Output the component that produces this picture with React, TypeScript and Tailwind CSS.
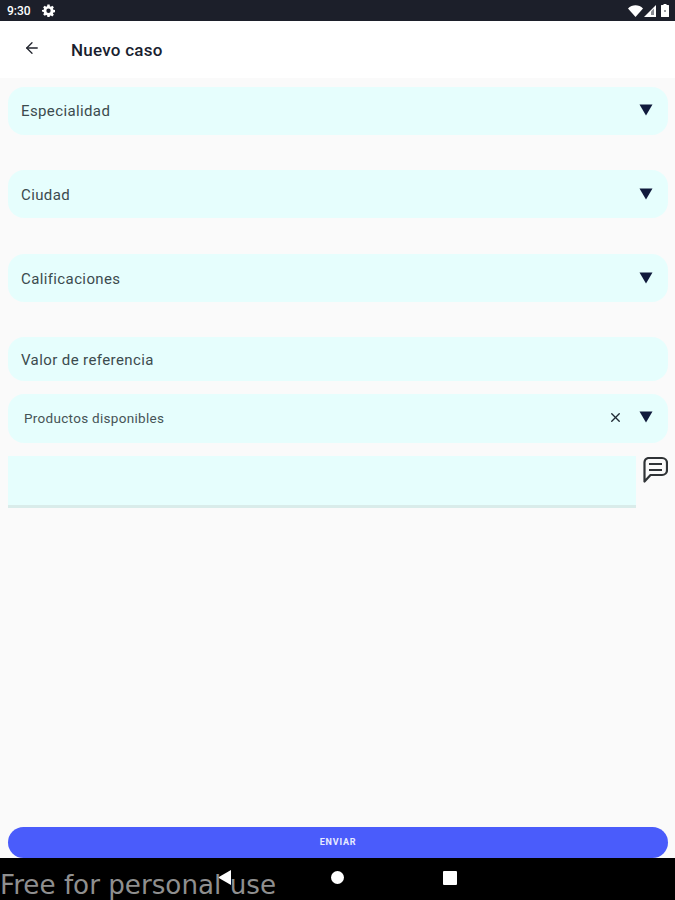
import React from 'react';
import { ArrowLeft, X } from 'lucide-react';

const font = { fontFamily: 'Roboto, sans-serif' };

function Caret() {
  return (
    <svg width="14" height="12" viewBox="0 0 14 12" className="mb-[3px] shrink-0">
      <path d="M0.5 0.5H13.5L7 11.5Z" fill="#101a3c" />
    </svg>
  );
}

function SelectField({ label, className }: { label: string; className: string }) {
  return (
    <div className={`flex h-12 items-center justify-between rounded-2xl bg-[#e6fefd] pl-[13px] pr-[15px] ${className}`}>
      <span className="text-[15px] tracking-[0.38px] text-[#3c4b4e]">{label}</span>
      <Caret />
    </div>
  );
}

export default function App() {
  return (
    <div className="relative flex h-[900px] w-[675px] flex-col overflow-hidden bg-[#fafafa]" style={font}>
      {/* barra de estado */}
      <div className="flex h-[21px] items-center justify-between bg-[#1c1f2a] pl-[7px] pr-[6px] text-white">
        <div className="flex items-center gap-[11px]">
          <span className="text-[12px] font-medium">9:30</span>
          <svg width="13" height="13" viewBox="0 0 24 24" fill="white">
            <path
              fillRule="evenodd"
              d="M10 1h4l.6 3.1 1.8.8L19 3.1 21.9 6l-1.8 2.6.8 1.8L24 11v4l-3.1.6-.8 1.8 1.8 2.6-2.9 2.9-2.6-1.8-1.8.8L14 24h-4l-.6-3.1-1.8-.8L5 21.9 2.1 19l1.8-2.6-.8-1.8L0 14v-3l3.1-.6.8-1.8L2.1 6 5 3.1l2.6 1.8 1.8-.8zM12 8.5a4 4 0 1 0 0 8 4 4 0 0 0 0-8z"
            />
          </svg>
        </div>
        <div className="flex items-center gap-[3px]">
          <svg width="15" height="12" viewBox="0 0 15 12" className="-mr-[2px]">
            <path d="M0 3.5C4 -0.8 11 -0.8 15 3.5L7.5 12Z" fill="white" />
          </svg>
          <svg width="12" height="12" viewBox="0 0 12 12">
            <path d="M0 12L12 0V12Z" fill="white" />
            <path d="M7 6.5L10 3.5V10H7Z" fill="#8a8d94" />
          </svg>
          <svg width="8" height="13" viewBox="0 0 8 13" className="ml-[2px]">
            <path d="M2.5 0H5.5V1H7.5A.5.5 0 0 1 8 1.5V12.5A.5.5 0 0 1 7.5 13H.5A.5.5 0 0 1 0 12.5V1.5A.5.5 0 0 1 .5 1H2.5Z" fill="white" />
            <rect x="3" y="6" width="2" height="2" fill="#9a9da3" />
          </svg>
        </div>
      </div>

      {/* cabecera */}
      <div className="flex h-[57px] items-center bg-white pl-[23px]">
        <ArrowLeft size={18} strokeWidth={1.7} className="mb-[3px] text-[#20232c]" />
        <span className="ml-[30px] mt-[2px] text-[17px] font-medium tracking-[0.25px] text-[#1a1f30]">Nuevo caso</span>
      </div>

      {/* formulario */}
      <div className="flex flex-1 flex-col pl-2 pr-[7px] pt-[9px]">
        <SelectField label="Especialidad" className="mb-[35px]" />
        <SelectField label="Ciudad" className="mb-[36px] pt-[2px]" />
        <SelectField label="Calificaciones" className="mb-[35px] pt-[2px]" />

        <div className="mb-[13px] flex h-[44px] items-center rounded-2xl bg-[#e6fefd] pl-[13px] pt-[2px]">
          <span className="text-[15px] tracking-[0.4px] text-[#3c4b4e]">Valor de referencia</span>
        </div>

        <div className="mb-[13px] flex h-[49px] items-center justify-between rounded-2xl bg-[#e6fefd] pl-4 pr-[15px]">
          <span className="mb-px text-[13.5px] tracking-[0.3px] text-[#465457]">Productos disponibles</span>
          <div className="flex items-center gap-[16px]">
            <X size={15} strokeWidth={2.2} className="mb-[2px] text-[#1f2a33]" />
            <Caret />
          </div>
        </div>

        <div className="flex items-start gap-[6px]">
          <div className="h-[52px] w-[628px] border-b-[3px] border-[#d9ecea] bg-[#e6fefd]" />
          <svg width="26" height="27" viewBox="0 0 26 27" fill="none" stroke="#2f3336" strokeWidth="2.2">
            <path d="M6 2H20A5 5 0 0 1 25 7V14A5 5 0 0 1 20 19H8.500L2.500 25.500V6A4.500 4.500 0 0 1 6 2Z" strokeLinejoin="round" />
            <path d="M7 8H20M7 14H20" />
          </svg>
        </div>

        <div className="mt-auto flex h-[31px] items-center justify-center rounded-full bg-[#4a5cfb]">
          <span className="text-[9px] font-bold tracking-[0.8px] text-[#e8ebff]">ENVIAR</span>
        </div>
      </div>

      {/* barra de navegación */}
      <div className="flex h-[42px] items-center bg-black">
        <div className="flex w-full items-center pb-[3px] pl-[218px]">
          <svg width="14" height="15" viewBox="0 0 14 15">
            <path d="M13 0V15L0 7.500Z" fill="white" />
          </svg>
          <div className="ml-[99px] h-[13px] w-[13px] rounded-full bg-white" />
          <div className="ml-[99px] h-[14px] w-[14px] rounded-[1px] bg-white" />
        </div>
      </div>

      {/* marca de agua */}
      <span
        className="absolute bottom-[-3px] left-0 text-[26.2px] leading-[36px] whitespace-nowrap text-[#8f8f8f]"
        style={{ fontFamily: '"DejaVu Sans", sans-serif' }}
      >
        Free for personal use
      </span>
    </div>
  );
}
